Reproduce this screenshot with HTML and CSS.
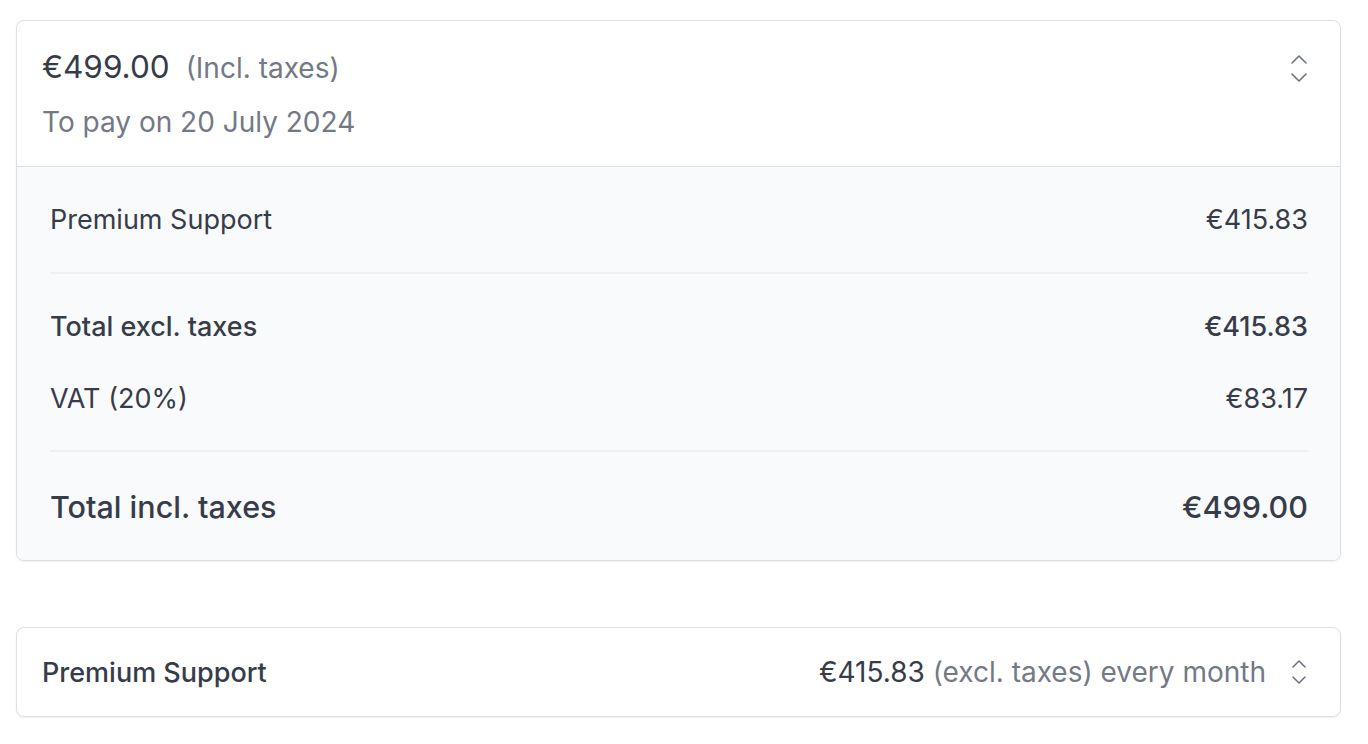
FILE: index.html
```html
<!DOCTYPE html>
<html lang="en">
<head>
  <meta charset="UTF-8" />
  <title>Payment summary</title>
  <link rel="stylesheet" href="styles.css">
</head>
<body>
  <div class="page">
    <div class="card">
      <div class="card-head">
        <div>
          <div class="price-line"><span class="price">€499.00</span><span class="muted">(Incl. taxes)</span></div>
          <div class="due">To pay on 20 July 2024</div>
        </div>
        <svg class="chevrons" width="18" height="30" viewBox="0 0 18 30" fill="none" stroke="#6b7280" stroke-width="1.6" stroke-linecap="round" stroke-linejoin="round">
          <path d="M2 10 L9 3 L16 10" />
          <path d="M2 21 L9 28 L16 21" />
        </svg>
      </div>
      <div class="details">
        <div class="row item"><span>Premium Support</span><span>€415.83</span></div>
        <div class="group">
          <div class="row strong"><span>Total excl. taxes</span><span>€415.83</span></div>
          <div class="row"><span>VAT (20%)</span><span>€83.17</span></div>
        </div>
        <div class="row total"><span>Total incl. taxes</span><span>€499.00</span></div>
      </div>
    </div>

    <div class="card plan">
      <span class="plan-name">Premium Support</span>
      <div class="plan-price">
        <span>€415.83 <span class="muted">(excl. taxes) every month</span></span>
        <svg class="chevrons" width="18" height="30" viewBox="0 0 18 30" fill="none" stroke="#6b7280" stroke-width="1.5" stroke-linecap="round" stroke-linejoin="round">
          <path d="M3 10 L9 4 L15 10" />
          <path d="M3 20 L9 26 L15 20" />
        </svg>
      </div>
    </div>
  </div>
</body>
</html>
```

FILE: styles.css
```css
body {
  margin: 0;
  font-family: Inter, "Noto Sans", sans-serif;
  color: #363c4a;
  background: #fff;
}
.page {
  padding: 20px 27px 20px 16px;
  display: flex;
  flex-direction: column;
  gap: 66px;
}
.card {
  border: 1px solid #dcdfe5;
  border-radius: 8px;
  box-shadow: 0 1px 2px rgba(0,0,0,0.06);
  overflow: hidden;
  background: #fff;
}
.card-head {
  display: flex;
  justify-content: space-between;
  align-items: flex-start;
  padding: 28px 32px 29px 25px;
  border-bottom: 1px solid #dcdfe5;
}
.price-line {
  display: flex;
  align-items: baseline;
  gap: 16px;
  line-height: 36px;
}
.price {
  font-size: 31.5px;
}
.muted {
  color: #737986;
}
.price-line .muted {
  font-size: 28px;
}
.due {
  margin-top: 21px;
  font-size: 28px;
  line-height: 30px;
  color: #737986;
}
.chevrons {
  margin-top: 4px;
}
.details {
  background: #f9fafb;
  padding: 0 32px 0 33px;
}
.row {
  display: flex;
  justify-content: space-between;
  align-items: center;
  font-size: 27px;
  height: 36px;
}
.row.item {
  height: 105px;
  border-bottom: 2px solid #eef0f3;
}
.group {
  padding: 34px 0 34px;
  border-bottom: 2px solid #eef0f3;
}
.group .row + .row {
  margin-top: 36px;
}
.strong {
  font-weight: 500;
}
.row.total {
  height: 108px;
  font-size: 30.5px;
  font-weight: 500;
}
.plan {
  display: flex;
  justify-content: space-between;
  align-items: center;
  height: 88px;
  padding: 0 32px 0 25px;
  font-size: 27px;
}
.plan-name {
  font-weight: 500;
}
.plan-price {
  display: flex;
  align-items: center;
  gap: 24px;
  font-size: 28px;
}
.plan-price .chevrons {
  margin-top: 0;
}
```
